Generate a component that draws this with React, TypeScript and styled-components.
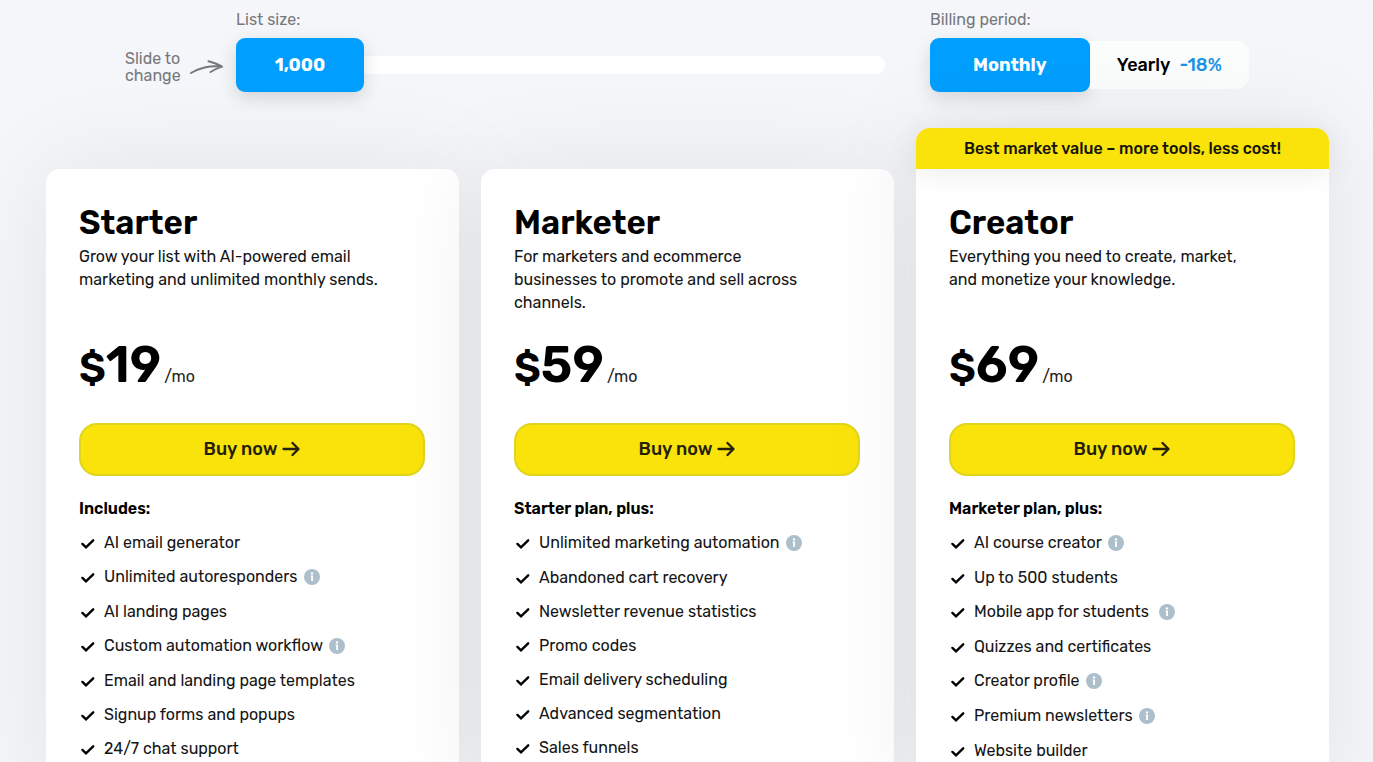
import React, { useState } from "react";
import styled, { createGlobalStyle } from "styled-components";

const GlobalStyle = createGlobalStyle`
  *, *::before, *::after { box-sizing: border-box; }
  html { background: #f5f6fa; }
  body {
    margin: 0;
    font-family: Rubik, Roboto, "Liberation Sans", sans-serif;
    font-size: 16px;
    color: #000;
    overflow-x: hidden;
  }
  button, input { font: inherit; color: inherit; }
`;

const Page = styled.main`
  padding: 10px 44px 40px 46px;
`;

const Controls = styled.div`
  display: flex;
  align-items: flex-start;
  justify-content: space-between;
  gap: 45px;
  padding: 0 80px 0 79px;
`;

const SliderGroup = styled.div`
  flex: 1;
  display: flex;
  align-items: flex-end;
  gap: 12px;
`;

const Hint = styled.p`
  display: flex;
  align-items: center;
  gap: 7px;
  height: 54px;
  margin: 0;
  padding-top: 4px;
  line-height: 17px;
  color: #77787b;
`;

const HintText = styled.span`
  width: 57px;
`;

const Field = styled.div`
  flex: 1;
  color: #77787b;
`;

const FieldLabel = styled.label`
  display: block;
  line-height: 20px;
  margin-bottom: 8px;
`;

const Slider = styled.div`
  position: relative;
  height: 54px;
`;

const Range = styled.input`
  appearance: none;
  display: block;
  width: 100%;
  height: 54px;
  margin: 0;
  background: transparent;
  cursor: pointer;

  &::-webkit-slider-runnable-track {
    height: 18px;
    border-radius: 9px;
    background: #fff;
  }
  &::-webkit-slider-thumb {
    appearance: none;
    width: 128px;
    height: 54px;
    margin-top: -18px;
    border-radius: 9px;
    background: #009fff;
    box-shadow: 0 6px 18px rgba(0, 0, 0, 0.14);
  }
`;

const RangeValue = styled.output`
  position: absolute;
  top: 0;
  width: 128px;
  line-height: 54px;
  text-align: center;
  font-size: 18px;
  font-weight: 700;
  color: #fff;
  pointer-events: none;
`;

const Billing = styled.fieldset`
  width: 319px;
  margin: 0;
  padding: 0;
  border: 0;
  color: #77787b;
`;

const BillingLegend = styled.legend`
  padding: 0;
  line-height: 20px;
  margin-bottom: 8px;
`;

const Toggle = styled.div`
  display: flex;
  align-items: center;
  height: 54px;
`;

const Option = styled.label<{ $active: boolean }>`
  display: flex;
  align-items: center;
  justify-content: center;
  gap: 9px;
  flex: 1;
  height: ${(p) => (p.$active ? 54 : 48)}px;
  border-radius: ${(p) => (p.$active ? "9px" : "0 12px 12px 0")};
  background: ${(p) => (p.$active ? "#009fff" : "#fcfdfd")};
  color: ${(p) => (p.$active ? "#fff" : "#000")};
  box-shadow: ${(p) => (p.$active ? "0 6px 18px rgba(0, 0, 0, 0.12)" : "none")};
  font-size: 18px;
  font-weight: ${(p) => (p.$active ? 700 : 500)};
  cursor: pointer;

  input {
    position: absolute;
    opacity: 0;
    pointer-events: none;
  }
`;

const Discount = styled.span`
  color: #1a94e6;
`;

const Plans = styled.div`
  display: grid;
  grid-template-columns: repeat(3, minmax(0, 1fr));
  gap: 22px;
  margin-top: 36px;
`;

const Plan = styled.section<{ $featured: boolean }>`
  display: flex;
  flex-direction: column;
  margin-top: ${(p) => (p.$featured ? 0 : 41)}px;
  border-radius: 14px;
  background: #fff;
  box-shadow: 0 0 100px rgba(0, 0, 0, 0.08);
`;

const Banner = styled.p`
  margin: 0;
  border-radius: 14px 14px 0 0;
  background: #fae30a;
  line-height: 41px;
  text-align: center;
  font-weight: 500;
  color: #15130a;
  box-shadow: 0 4px 30px rgba(0, 0, 0, 0.08);
`;

const PlanBody = styled.div`
  padding: 32px 34px 40px 33px;
`;

const PlanName = styled.h2`
  margin: 0 0 1px;
  font-size: 33px;
  font-weight: 600;
  line-height: 43px;
`;

const Description = styled.p`
  max-width: 300px;
  min-height: 95px;
  margin: 0;
  line-height: 23px;
  color: #141414;
`;

const Price = styled.p`
  display: flex;
  align-items: baseline;
  margin: 0;
  line-height: 1;
  font-weight: 600;
`;

const Currency = styled.span`
  font-size: 41px;
`;

const Amount = styled.span`
  font-size: 50px;
`;

const Period = styled.span`
  margin-left: 3px;
  font-size: 16px;
  font-weight: 400;
  color: #222;
`;

const BuyButton = styled.button`
  display: flex;
  align-items: center;
  justify-content: center;
  gap: 5px;
  width: 100%;
  height: 53px;
  margin: 33px 0 22px;
  padding: 0 0 1px;
  border: 2px solid #e0d51c;
  border-radius: 18px;
  background: #fae30a;
  color: #24200a;
  font-size: 18px;
  font-weight: 500;
  cursor: pointer;
`;

const ListTitle = styled.h3`
  margin: 0 0 12px;
  font-size: 16px;
  font-weight: 600;
  line-height: 22px;
`;

const Features = styled.ul`
  display: flex;
  flex-direction: column;
  gap: 12px;
  margin: 0;
  padding: 0;
  list-style: none;
`;

const Feature = styled.li<{ $info: boolean }>`
  display: flex;
  align-items: flex-start;
  height: ${(p) => (p.$info ? 23 : 22)}px;
  line-height: 22px;
  color: #141414;
`;

const CheckSvg = styled.svg`
  flex: none;
  width: 17px;
  height: 22px;
  margin-right: 8px;
`;

const InfoButton = styled.button`
  display: flex;
  margin: 3px 0 0 6px;
  padding: 0;
  border: 0;
  background: none;
  cursor: pointer;
`;

const Check = () => (
  <CheckSvg viewBox="0 0 17 22" fill="none" stroke="#000" aria-hidden="true">
    <path d="M3.400 11.900 7 15.400 14.200 8.300" strokeWidth="2.400" strokeLinecap="round" strokeLinejoin="miter" />
  </CheckSvg>
);

const InfoIcon = () => (
  <svg width="16" height="16" viewBox="0 0 16 16" aria-hidden="true">
    <circle cx="8" cy="8" r="8" fill="#adbfcb" />
    <circle cx="8" cy="4.4" r="1.2" fill="#fff" />
    <path d="M6.600 6.600h2.400v5.400H7.200V7.700h-.6z" fill="#fff" />
  </svg>
);

const ArrowRight = () => (
  <svg width="18" height="16" viewBox="0 0 18 16" fill="none" stroke="#24200a" strokeWidth="2.3" strokeLinecap="round" strokeLinejoin="round" aria-hidden="true">
    <path d="M1.500 8h14.800M10.500 2l6 6-6 6" />
  </svg>
);

const HandArrow = () => (
  <svg width="35" height="16" viewBox="0 0 35 16" fill="none" stroke="#77787b" strokeWidth="2" strokeLinecap="round" strokeLinejoin="round" aria-hidden="true">
    <path d="M2 14C11 9 19 6.500 33 7.600M19.500 2.200C25 3.600 29 5 33 7.600C29 8.800 25.500 10.500 21.500 13" />
  </svg>
);

type Item = { text: string; info?: boolean };
type PlanData = {
  name: string;
  description: string;
  price: number;
  listTitle: string;
  items: Item[];
  banner?: string;
};

const plans: PlanData[] = [
  {
    name: "Starter",
    description: "Grow your list with AI-powered email marketing and unlimited monthly sends.",
    price: 19,
    listTitle: "Includes:",
    items: [
      { text: "AI email generator" },
      { text: "Unlimited autoresponders", info: true },
      { text: "AI landing pages" },
      { text: "Custom automation workflow", info: true },
      { text: "Email and landing page templates" },
      { text: "Signup forms and popups" },
      { text: "24/7 chat support" },
    ],
  },
  {
    name: "Marketer",
    description: "For marketers and ecommerce businesses to promote and sell across channels.",
    price: 59,
    listTitle: "Starter plan, plus:",
    items: [
      { text: "Unlimited marketing automation", info: true },
      { text: "Abandoned cart recovery" },
      { text: "Newsletter revenue statistics" },
      { text: "Promo codes" },
      { text: "Email delivery scheduling" },
      { text: "Advanced segmentation" },
      { text: "Sales funnels" },
    ],
  },
  {
    name: "Creator",
    description: "Everything you need to create, market, and monetize your knowledge.",
    price: 69,
    listTitle: "Marketer plan, plus:",
    banner: "Best market value – more tools, less cost!",
    items: [
      { text: "AI course creator", info: true },
      { text: "Up to 500 students" },
      { text: "Mobile app for students\u00a0", info: true },
      { text: "Quizzes and certificates" },
      { text: "Creator profile", info: true },
      { text: "Premium newsletters", info: true },
      { text: "Website builder" },
    ],
  },
];

const sizes = ["1,000", "2,500", "5,000", "10,000", "25,000", "50,000", "100,000"];

export default function App() {
  const [size, setSize] = useState(0);
  const [period, setPeriod] = useState("monthly");
  const ratio = size / (sizes.length - 1);

  return (
    <>
      <GlobalStyle />
      <Page>
        <Controls>
          <SliderGroup>
            <Hint>
              <HintText>Slide to change</HintText>
              <HandArrow />
            </Hint>
            <Field>
              <FieldLabel htmlFor="list-size">List size:</FieldLabel>
              <Slider>
                <Range
                  id="list-size"
                  type="range"
                  min={0}
                  max={sizes.length - 1}
                  value={size}
                  onChange={(e) => setSize(Number(e.target.value))}
                />
                <RangeValue htmlFor="list-size" style={{ left: `calc((100% - 128px) * ${ratio})` }}>
                  {sizes[size]}
                </RangeValue>
              </Slider>
            </Field>
          </SliderGroup>
          <Billing>
            <BillingLegend>Billing period:</BillingLegend>
            <Toggle>
              <Option $active={period === "monthly"}>
                <input type="radio" name="period" checked={period === "monthly"} onChange={() => setPeriod("monthly")} />
                Monthly
              </Option>
              <Option $active={period === "yearly"}>
                <input type="radio" name="period" checked={period === "yearly"} onChange={() => setPeriod("yearly")} />
                Yearly <Discount>-18%</Discount>
              </Option>
            </Toggle>
          </Billing>
        </Controls>
        <Plans>
          {plans.map((plan) => (
            <Plan key={plan.name} $featured={!!plan.banner}>
              {plan.banner && <Banner>{plan.banner}</Banner>}
              <PlanBody>
                <PlanName>{plan.name}</PlanName>
                <Description>{plan.description}</Description>
                <Price>
                  <Currency>$</Currency>
                  <Amount>{plan.price}</Amount>
                  <Period>/mo</Period>
                </Price>
                <BuyButton type="button">
                  Buy now
                  <ArrowRight />
                </BuyButton>
                <ListTitle>{plan.listTitle}</ListTitle>
                <Features>
                  {plan.items.map((item) => (
                    <Feature key={item.text} $info={!!item.info}>
                      <Check />
                      {item.text}
                      {item.info && (
                        <InfoButton type="button" aria-label={`About ${item.text}`}>
                          <InfoIcon />
                        </InfoButton>
                      )}
                    </Feature>
                  ))}
                </Features>
              </PlanBody>
            </Plan>
          ))}
        </Plans>
      </Page>
    </>
  );
}
